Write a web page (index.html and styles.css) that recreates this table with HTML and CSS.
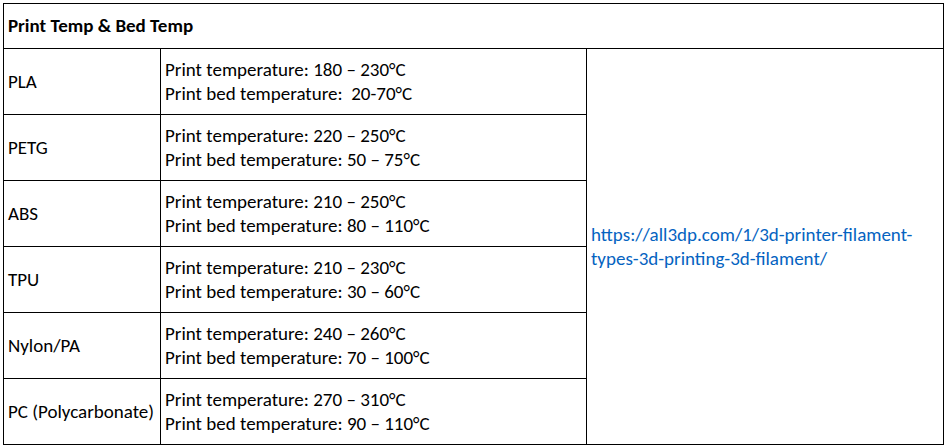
FILE: index.html
```html
<!DOCTYPE html>
<html>
<head>
<meta charset="utf-8">
<link rel="stylesheet" href="styles.css">
</head>
<body>
<table class="temps">
  <colgroup>
    <col class="c1"><col class="c2"><col class="c3">
  </colgroup>
  <tr class="head"><th colspan="3">Print Temp &amp; Bed Temp</th></tr>
  <tr>
    <td>PLA</td>
    <td>Print temperature: 180 – 230°C<br>Print bed temperature:&nbsp; 20-70°C</td>
    <td rowspan="6" class="src"><a href="#">https://all3dp.com/1/3d-printer-filament-<br>types-3d-printing-3d-filament/</a></td>
  </tr>
  <tr>
    <td>PETG</td>
    <td>Print temperature: 220 – 250°C<br>Print bed temperature: 50 – 75°C</td>
  </tr>
  <tr>
    <td>ABS</td>
    <td>Print temperature: 210 – 250°C<br>Print bed temperature: 80 – 110°C</td>
  </tr>
  <tr>
    <td>TPU</td>
    <td>Print temperature: 210 – 230°C<br>Print bed temperature: 30 – 60°C</td>
  </tr>
  <tr>
    <td>Nylon/PA</td>
    <td>Print temperature: 240 – 260°C<br>Print bed temperature: 70 – 100°C</td>
  </tr>
  <tr>
    <td>PC (Polycarbonate)</td>
    <td>Print temperature: 270 – 310°C<br>Print bed temperature: 90 – 110°C</td>
  </tr>
</table>
</body>
</html>
```
FILE: styles.css
```css
html, body {
  margin: 0;
  padding: 0;
  background: #fff;
}
body {
  padding: 3px 0 0 3px;
  font-family: "Carlito", "Liberation Sans", sans-serif;
  font-size: 19px;
  color: #000;
}
.temps {
  border-collapse: collapse;
  table-layout: fixed;
  width: 940px;
}
.c1 { width: 157px; }
.c2 { width: 426px; }
.c3 { width: 357px; }
.temps th, .temps td {
  border: 1px solid #000;
  padding: 0 4px;
  text-align: left;
  vertical-align: middle;
  line-height: 24px;
}
.temps th {
  height: 44px;
  font-weight: bold;
}
.temps td {
  height: 65px;
}
.src a {
  color: #0563c1;
  text-decoration: none;
}
```
